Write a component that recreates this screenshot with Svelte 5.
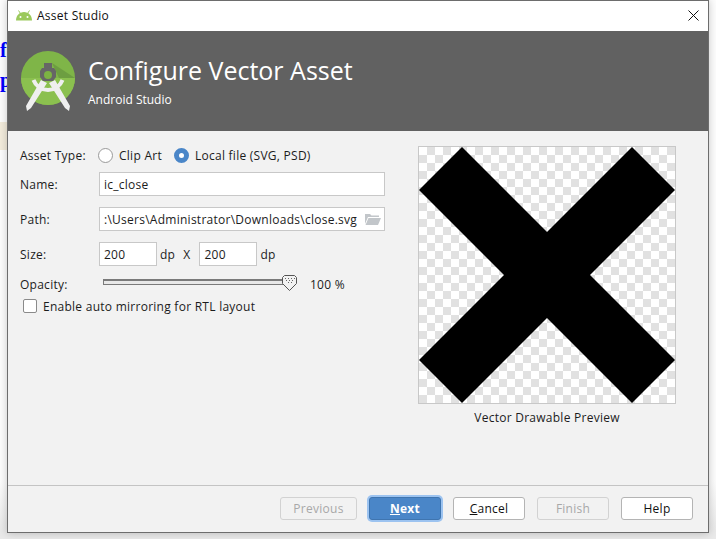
<script lang="ts">
	const buttons = [
		{ label: 'Previous', disabled: true },
		{ label: 'Next', key: 'N', rest: 'ext', primary: true },
		{ label: 'Cancel', key: 'C', rest: 'ancel' },
		{ label: 'Finish', disabled: true },
		{ label: 'Help' }
	];
</script>

<div class="page">
	<!-- bits of the page behind the dialog -->
	<span class="behind f">f</span>
	<span class="behind p">p</span>
	<div class="behind band"></div>

	<div class="window">
		<div class="titlebar">
			<svg class="droid" width="16" height="11" viewBox="0 0 16 11">
				<path d="M0 10.500C0 5.500 3.500 2 8 2s8 3.500 8 8.500z" fill="#9bc95c" />
				<path d="M2.500 0.500 4.500 3.500M13.500 0.500 11.500 3.500" stroke="#9bc95c" stroke-width="1" />
				<circle cx="4.500" cy="7" r="1" fill="#fff" />
				<circle cx="11.500" cy="7" r="1" fill="#fff" />
			</svg>
			<span class="window-title">Asset Studio</span>
			<svg class="close" width="11" height="11" viewBox="0 0 11 11">
				<path d="M0.500 0.500 10.500 10.500M10.500 0.500 0.500 10.500" stroke="#111" stroke-width="1" fill="none" />
			</svg>
		</div>

		<header class="banner">
			<svg class="logo" width="56" height="62" viewBox="0 0 56 62">
				<circle cx="27" cy="27" r="27" fill="#7fb548" />
				<path d="M0 27a27 27 0 0 0 54 0z" fill="#8bc04f" />
				<path d="M31 12 54 27H38z" fill="#5f8a3c" opacity="0.55" />
				<path d="M12.500 29a15.500 15.500 0 0 0 29 0" fill="none" stroke="#efefef" stroke-width="4" />
				<path d="M20 29 26 32 10 57 6 60 5 55zM34 29 28 32 44 57 48 60 49 55z" fill="#efefef" />
				<path d="M23 12h8v5h2l2 3v6l-3 4H22l-3-4v-6l2-3h2z" fill="#666" />
				<circle cx="27" cy="24" r="4" fill="#7cb342" />
			</svg>
			<div class="banner-text">
				<h1>Configure Vector Asset</h1>
				<p>Android Studio</p>
			</div>
		</header>

		<main class="content">
			<form class="form">
				<div class="row type-row">
					<span class="label">Asset Type:</span>
					<span class="radio"></span>
					<span class="radio-text clip">Clip Art</span>
					<span class="radio on"></span>
					<span class="radio-text">Local file (SVG, PSD)</span>
				</div>
				<div class="row name-row">
					<span class="label">Name:</span>
					<div class="field wide">ic_close</div>
				</div>
				<div class="row path-row">
					<span class="label">Path:</span>
					<div class="field wide path">
						<span class="path-text">:\Users\Administrator\Downloads\close.svg</span>
						<svg width="16" height="12" viewBox="0 0 16 12">
							<path d="M0 11V1h5l1.500 1.500H14V4H3z" fill="#c2c6ca" />
							<path d="M0.500 12 3.500 5H16l-3 7z" fill="#c2c6ca" />
						</svg>
					</div>
				</div>
				<div class="row size-row">
					<span class="label">Size:</span>
					<div class="field small">200</div>
					<span class="unit">dp</span>
					<span class="times">X</span>
					<div class="field small">200</div>
					<span class="unit">dp</span>
				</div>
				<div class="row opacity-row">
					<span class="label">Opacity:</span>
					<div class="slider">
						<div class="track"></div>
						<svg class="thumb" width="15" height="16" viewBox="0 0 15 16">
							<path d="M0.500 2.500 2.500 0.500h10l2 2v6l-7 7-7-7z" fill="#f2f2f2" stroke="#555" />
							<g fill="#666">
								<rect x="3" y="3" width="1" height="1" />
								<rect x="6" y="3" width="1" height="1" />
								<rect x="9" y="3" width="1" height="1" />
								<rect x="12" y="3" width="1" height="1" />
								<rect x="4" y="5" width="1" height="1" />
								<rect x="7" y="5" width="1" height="1" />
								<rect x="10" y="5" width="1" height="1" />
								<rect x="6" y="7" width="1" height="1" />
								<rect x="9" y="7" width="1" height="1" />
							</g>
						</svg>
					</div>
					<span class="percent">100 %</span>
				</div>
				<div class="row check-row">
					<span class="checkbox"></span>
					<span>Enable auto mirroring for RTL layout</span>
				</div>
			</form>

			<section class="preview">
				<div class="canvas">
					<svg width="256" height="256" viewBox="0 0 256 256">
						<polygon points="0,43 43,0 128,85 213,0 256,43 171,128 256,213 213,256 128,171 43,256 0,213 85,128" fill="#000" />
					</svg>
				</div>
				<div class="caption">Vector Drawable Preview</div>
			</section>
		</main>

		<footer class="footer">
			{#each buttons as b}
				<button type="button" class="btn" class:primary={b.primary} disabled={b.disabled}>
					{#if b.key}<u>{b.key}</u>{b.rest}{:else}{b.label}{/if}
				</button>
			{/each}
		</footer>
	</div>
</div>

<style>
	:global(body) {
		margin: 0;
		background: #fff;
	}

	.page {
		position: relative;
		width: 716px;
		height: 539px;
		overflow: hidden;
		background: linear-gradient(#fdfdfd 0 480px, #e9e9e9 530px);
		font-family: 'Open Sans', 'Liberation Sans', sans-serif;
		font-size: 12px;
		letter-spacing: 0.26px;
		color: #1c1c1c;
	}

	.behind {
		position: absolute;
		left: 0;
	}

	.f,
	.p {
		font-family: 'Liberation Serif', serif;
		font-size: 20px;
		font-weight: 700;
		line-height: 20px;
		color: #0000ff;
	}

	.f {
		top: 40px;
	}

	.p {
		top: 70px;
	}

	.band {
		top: 122px;
		width: 8px;
		height: 28px;
		background: #f3ecdc;
	}

	.window {
		position: absolute;
		left: 7px;
		top: 0;
		width: 700px;
		height: 531px;
		display: flex;
		flex-direction: column;
		background: #f2f2f2;
		border: 1px solid #6d6d6d;
		box-shadow: 0 0 8px rgba(0, 0, 0, 0.22);
	}

	.titlebar {
		flex: 0 0 30px;
		box-sizing: border-box;
		display: flex;
		align-items: center;
		padding: 0 9px 2px 8px;
		background: #fff;
	}

	.droid {
		margin-right: 5px;
	}

	.window-title {
		flex: 1;
		font-size: 12px;
		color: #111;
	}

	.banner {
		flex: 0 0 100px;
		display: flex;
		align-items: flex-start;
		background: #616161;
		color: #fff;
		letter-spacing: 0;
	}

	.logo {
		margin: 20px 0 0 13px;
	}

	.banner-text {
		margin: 21px 0 0 11px;
	}

	h1 {
		margin: 0;
		font-size: 25px;
		font-weight: 400;
		line-height: 36px;
	}

	.banner-text p {
		margin: 4px 0 0;
		font-size: 12px;
		line-height: 16px;
	}

	.content {
		flex: 1;
		display: flex;
		justify-content: space-between;
		padding: 14px 32px 0 12px;
		border-bottom: 1px solid #c4c4c4;
	}

	.form {
		display: flex;
		flex-direction: column;
		width: 366px;
	}

	.row {
		display: flex;
		align-items: center;
	}

	.label {
		flex: 0 0 79px;
	}

	.type-row {
		height: 20px;
		margin-bottom: 7px;
	}

	.type-row .label {
		flex-basis: 78px;
	}

	.radio {
		box-sizing: border-box;
		width: 15px;
		height: 15px;
		border: 1px solid #9a9a9a;
		border-radius: 50%;
		background: #fff;
	}

	.radio.on {
		border: 5px solid #4a86c8;
	}

	.radio-text {
		margin-left: 6px;
	}

	.clip {
		margin-right: 12px;
	}

	.field {
		box-sizing: border-box;
		height: 24px;
		display: flex;
		align-items: center;
		padding: 0 4px;
		background: #fff;
		border: 1px solid #c8c8c8;
	}

	.wide {
		width: 286px;
	}

	.small {
		width: 58px;
	}

	.name-row {
		margin-bottom: 11px;
	}

	.path-row {
		margin-bottom: 11px;
	}

	.path {
		justify-content: space-between;
		padding-right: 3px;
	}

	.path-text {
		white-space: nowrap;
	}

	.unit {
		margin: 0 0 0 3px;
	}

	.times {
		margin: 0 9px 0 8px;
	}

	.size-row {
		margin-bottom: 9px;
	}

	.opacity-row {
		height: 18px;
		margin-bottom: 5px;
	}

	.opacity-row .label {
		flex-basis: 83px;
	}

	.slider {
		position: relative;
		width: 193px;
		height: 18px;
	}

	.track {
		position: absolute;
		left: 0;
		top: 4px;
		width: 180px;
		height: 3px;
		background: #e8e8e8;
		border: 1px solid #7a7a7a;
		border-width: 2px 1px 1px;
	}

	.thumb {
		position: absolute;
		left: 179px;
		top: 0;
	}

	.percent {
		margin-left: 14px;
	}

	.check-row {
		height: 16px;
		padding-left: 3px;
	}

	.checkbox {
		box-sizing: border-box;
		width: 14px;
		height: 14px;
		margin-right: 6px;
		background: #fff;
		border: 1px solid #8a8a8a;
		border-radius: 2px;
	}

	.preview {
		display: flex;
		flex-direction: column;
		align-items: center;
		margin-top: 1px;
	}

	.canvas {
		box-sizing: border-box;
		width: 258px;
		height: 258px;
		border: 1px solid #c8c8c8;
		background-color: #fff;
		background-image: conic-gradient(#e1e1e1 25%, #fff 0 50%, #e1e1e1 0 75%, #fff 0);
		background-size: 16px 16px;
	}

	.canvas svg {
		display: block;
	}

	.caption {
		margin-top: 6px;
		line-height: 16px;
	}

	.footer {
		flex: 0 0 46px;
		display: flex;
		justify-content: flex-end;
		gap: 12px;
		padding: 11px 15px 0 0;
		box-sizing: border-box;
	}

	.btn {
		box-sizing: border-box;
		width: 72px;
		height: 23px;
		padding: 0;
		font: inherit;
		letter-spacing: inherit;
		color: #111;
		background: #fff;
		border: 1px solid #b4b4b4;
		border-radius: 3px;
	}

	.btn:first-child {
		width: 77px;
	}

	.btn:disabled {
		color: #a8a8a8;
		background: #f2f2f2;
		border-color: #d2d2d2;
	}

	.primary {
		color: #fff;
		font-weight: 700;
		background: #4a86c8;
		border-color: #3f75b0;
		box-shadow: 0 0 0 2px #9cc3f0;
	}
</style>
